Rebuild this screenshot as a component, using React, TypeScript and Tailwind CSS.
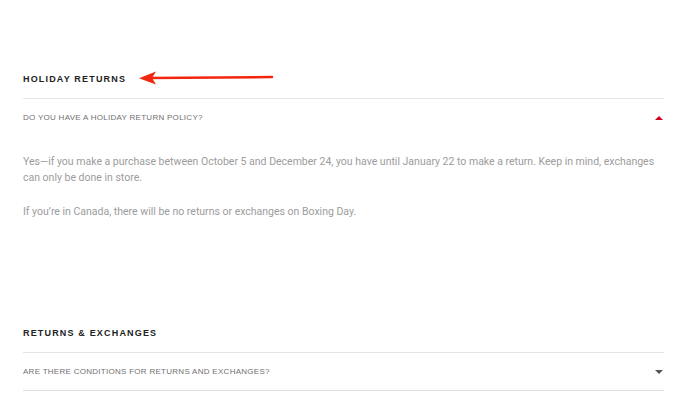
const font = { fontFamily: '"Liberation Sans", Arial, sans-serif' };

function Heading({ children }: { children: string }) {
  return (
    <h2 className="border-b border-[#e6e6e6] pb-[13px] text-[9px] leading-[12px] font-bold tracking-[0.13em] text-[#222]">
      {children}
    </h2>
  );
}

function Question({
  children,
  open,
  tall
}: {
  children: string;
  open?: boolean;
  tall?: boolean;
}) {
  return (
    <div
      className={`flex items-center justify-between ${tall ? "h-[38px]" : "h-[38px] border-b border-[#e0e0e0]"}`}>
      <span className="text-[8px] tracking-[0.035em] text-[#707070]">
        {children}
      </span>
      {open ? (
        <span className="mr-[1px] h-0 w-0 border-x-[4px] border-b-[4px] border-x-transparent border-b-[#d0021b]" />
      ) : (
        <span className="mr-[1px] h-0 w-0 border-x-[4px] border-t-[4px] border-x-transparent border-t-[#555]" />
      )}
    </div>
  );
}

export default function App() {
  return (
    <div className="relative h-[400px] w-[675px] overflow-hidden bg-white" style={font}>
      <div className="ml-[23px] w-[641px]">
        <div className="mt-[73px]">
          <Heading>HOLIDAY RETURNS</Heading>
          <Question open tall>
            DO YOU HAVE A HOLIDAY RETURN POLICY?
          </Question>
          <div
            className="mt-[17px] text-[10.5px] leading-[16px] text-[#9c9c9c]"
            style={{ fontFamily: 'Roboto, "Liberation Sans", sans-serif' }}>
            <p className="pr-[4px]">
              Yes—if you make a purchase between October 5 and December 24, you have until January 22 to make a return. Keep in mind, exchanges can only be done in store.
            </p>
            <p className="mt-[18px]">
              If you’re in Canada, there will be no returns or exchanges on Boxing Day.
            </p>
          </div>
        </div>
        <div className="mt-[107px]">
          <Heading>RETURNS &amp; EXCHANGES</Heading>
          <Question>ARE THERE CONDITIONS FOR RETURNS AND EXCHANGES?</Question>
        </div>
      </div>

      <svg
        className="absolute left-[137px] top-[70px]"
        width="140"
        height="16"
        viewBox="0 0 140 16">
        <line x1="12" y1="8" x2="135" y2="7" stroke="#f2260f" strokeWidth="2.5" strokeLinecap="round" />
        <path d="M2 8.2 L19 1.5 L15 8 L19 14.5 Z" fill="#f2260f" />
      </svg>
    </div>
  );
}
